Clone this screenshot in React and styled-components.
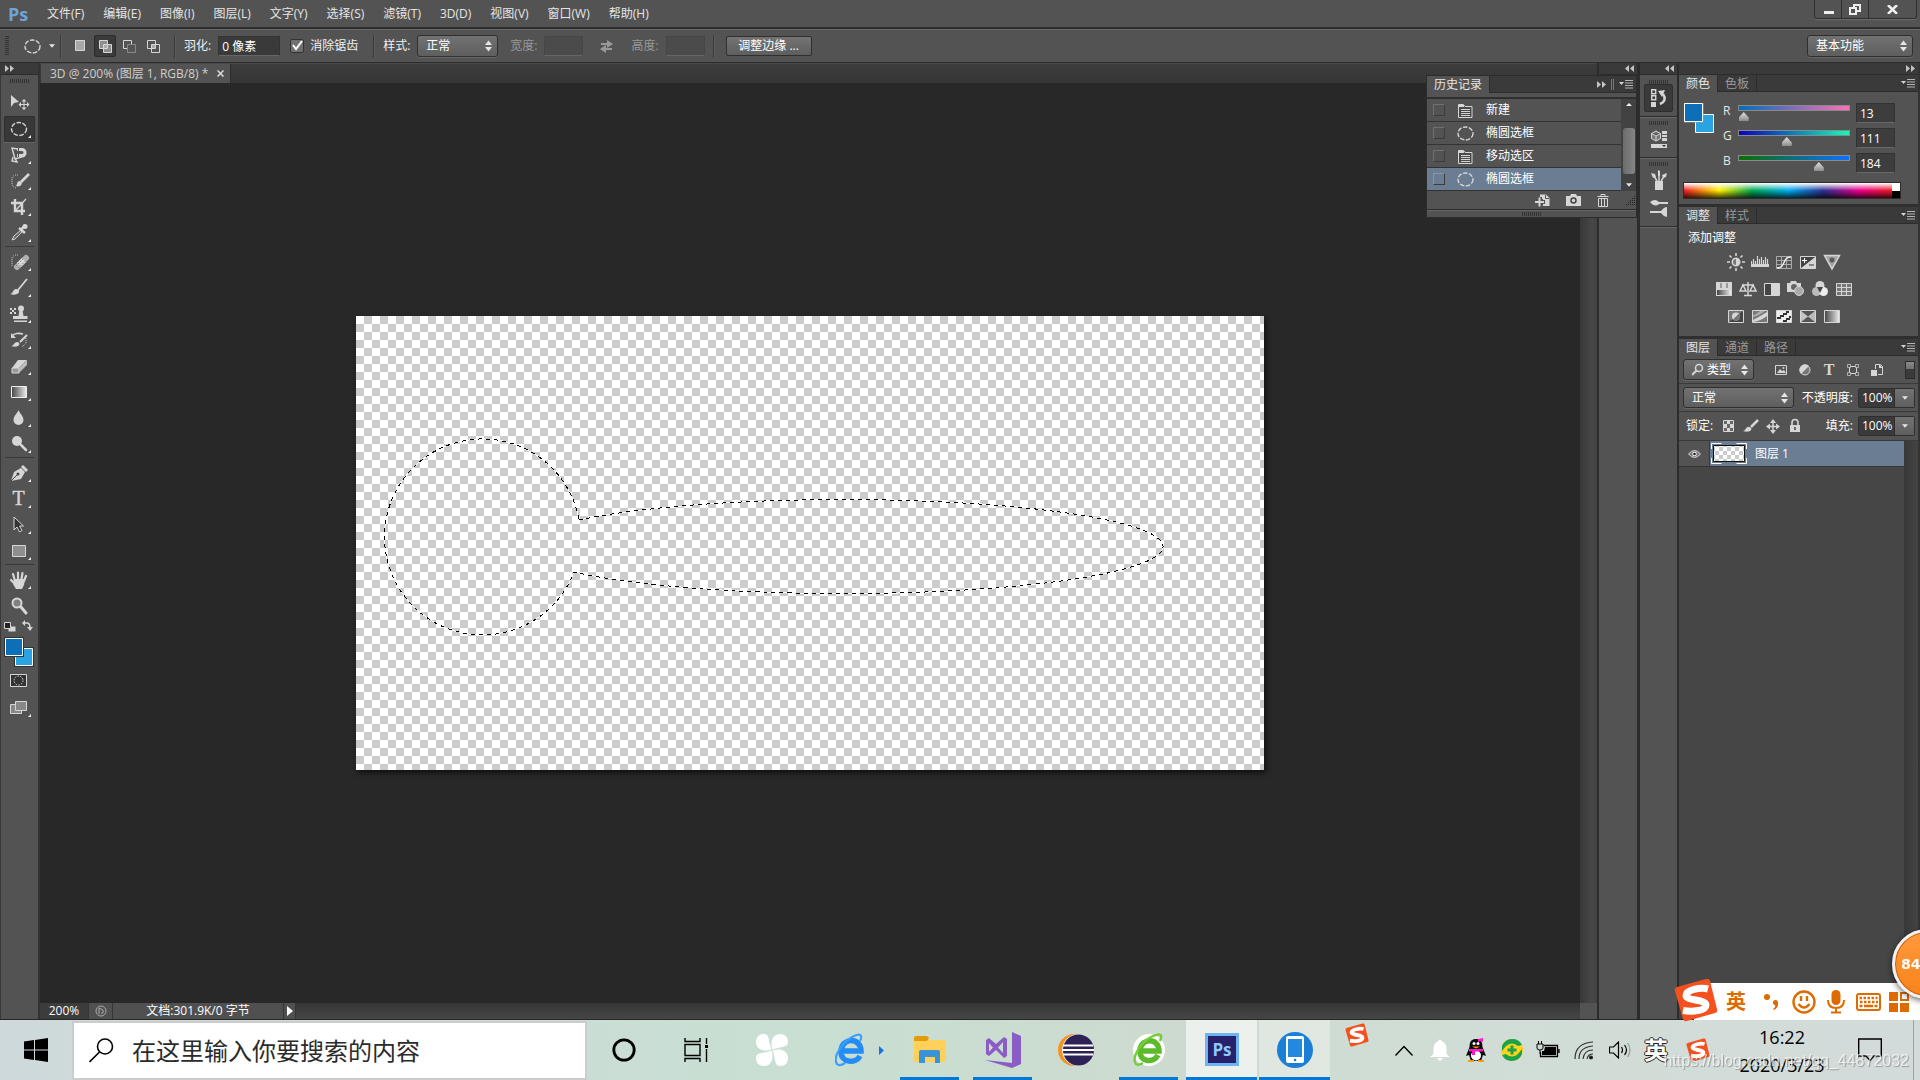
import React, { useState } from 'react';
import styled, { createGlobalStyle } from 'styled-components';

const GlobalStyle = createGlobalStyle`
  * {
    box-sizing: border-box;
  }

  body {
    margin: 0;
    overflow: hidden;
    background-color: #282828;
  }

  button, input, select {
    margin: 0;
    padding: 0;
    border: 0;
    border-radius: 0;
    font: inherit;
    color: inherit;
    background: none;
    outline: none;
    appearance: none;
  }

  svg {
    display: block;
    flex: none;
  }
`;

const PageDiv = styled.div`
  display: flex;
  flex-direction: column;
  height: 100vh;
  font-family: "Open Sans", "Noto Sans CJK SC", sans-serif;
  font-size: 12px;
  line-height: 16px;
  color: #e6e6e6;
  background-color: #535353;
`;

/* menu bar */

const MenuBar = styled.header`
  display: flex;
  align-items: center;
  flex: none;
  height: 29px;
  padding-left: 8px;
  border-bottom: 2px solid #2c2c2c;
`;

const PsLogo = styled.b`
  width: 39px;
  font-family: "Open Sans", sans-serif;
  font-size: 18px;
  line-height: 24px;
  color: #6ea3d8;
`;

const MenuNav = styled.nav`
  display: flex;
  flex: 1;
  gap: 19px;
`;

const MenuButton = styled.button`
  white-space: nowrap;
`;

const WindowButtons = styled.div`
  display: flex;
  align-self: flex-start;
  height: 19px;
  margin-right: 3px;
  border: 1px solid #2f2f2f;
  border-top: 0;
  border-radius: 0 0 3px 3px;
  box-shadow: 0 1px 0 #6a6a6a;

  button {
    display: flex;
    align-items: center;
    justify-content: center;
    width: 27px;
    border-right: 1px solid #2f2f2f;

    &:last-child {
      width: 47px;
      border-right: 0;
    }
  }
`;

/* options bar */

const OptionsBar = styled.div`
  display: flex;
  align-items: center;
  flex: none;
  height: 34px;
  padding-left: 5px;
  padding-right: 7px;
  border-top: 1px solid #686868;
  border-bottom: 1px solid #2c2c2c;
`;

const GripV = styled.div`
  width: 4px;
  height: 20px;
  background: repeating-linear-gradient(#333 0 1px, transparent 1px 2px);
`;

const GripH = styled.div`
  width: 20px;
  height: 4px;
  margin: 0 auto;
  background: repeating-linear-gradient(90deg, #333 0 1px, transparent 1px 2px);
`;

const Separator = styled.div`
  width: 2px;
  height: 23px;
  margin: 0 8px;
  border-left: 1px solid #3a3a3a;
  border-right: 1px solid #5c5c5c;
`;

const CurrentTool = styled.button`
  display: flex;
  align-items: center;
  gap: 8px;
  margin-left: 15px;
  margin-right: -3px;
`;

const ModeButton = styled.button`
  display: flex;
  align-items: center;
  justify-content: center;
  width: 22px;
  height: 22px;
  margin-right: 2px;
  border-radius: 3px;
  background-color: ${props => (props.$active ? '#3a3a3a' : 'transparent')};
  box-shadow: ${props => (props.$active ? 'inset 0 0 0 1px #2c2c2c' : 'none')};
`;

const OptionLabel = styled.label`
  margin-right: 7px;
  white-space: nowrap;
  color: ${props => (props.$off ? '#989898' : '#f0f0f0')};
`;

const OptionInput = styled.input`
  width: ${props => props.$w}px;
  height: 20px;
  padding-left: 3px;
  border: 1px solid ${props => (props.disabled ? '#464646' : '#343434')};
  border-bottom-color: #666;
  color: #fff;
  background-color: ${props => (props.disabled ? '#4b4b4b' : '#3a3a3a')};
`;

const CheckBox = styled.input`
  width: 14px;
  height: 14px;
  margin: 0 6px 0 10px;
  border: 1px solid #333;
  border-radius: 2px;
  background-color: #707070;

  &:checked {
    background-image: url("data:image/svg+xml,%3Csvg xmlns='http://www.w3.org/2000/svg' viewBox='0 0 12 12'%3E%3Cpath d='M2 5l3 4 6-8' fill='none' stroke='white' stroke-width='2'/%3E%3C/svg%3E");
  }
`;

const SelectBox = styled.div`
  display: flex;
  align-items: center;
  width: ${props => props.$w}px;
  height: ${props => props.$h || 22}px;
  padding: 0 5px 0 8px;
  border: 1px solid #2f2f2f;
  border-radius: 3px;
  color: #fff;
  background-image: linear-gradient(#727272, #5e5e5e);
  box-shadow: 0 1px 0 #666;

  select {
    flex: 1;
    min-width: 0;
    height: 100%;
  }

  & + label {
    margin-left: 12px;
  }
`;

const PushButton = styled.button`
  width: 86px;
  height: 20px;
  margin-left: 3px;
  border: 1px solid #2f2f2f;
  border-radius: 2px;
  color: #fff;
  background-image: linear-gradient(#747474, #5e5e5e);
`;

const Spacer = styled.div`
  flex: 1;
`;

/* workspace */

const Workspace = styled.main`
  display: flex;
  flex: 1;
  min-height: 0;
  border-bottom: 1px solid #262626;
`;

const ColumnHead = styled.div`
  display: flex;
  align-items: center;
  justify-content: ${props => props.$side || 'flex-end'};
  flex: none;
  height: 12px;
  padding: 0 3px 0 4px;
  border-bottom: 1px solid #2c2c2c;
  background-color: #3a3a3a;
`;

const ToolColumn = styled.aside`
  display: flex;
  flex-direction: column;
  flex: none;
  width: 40px;
  border-left: 1px solid #383838;
  border-right: 2px solid #333;
  background-color: #535353;

  > ${GripH} {
    margin: 4px auto 7px 9px;
  }
`;

const ToolButton = styled.button`
  display: block;
  flex: none;
  width: 31px;
  height: 26px;
  margin-left: 3px;
  border-radius: 2px;
  background-color: ${props => (props.$active ? '#383838' : 'transparent')};
  box-shadow: ${props => (props.$active ? 'inset 0 0 0 1px #303030, 0 1px 0 #666' : 'none')};
`;

const ToolLine = styled.div`
  flex: none;
  height: 3px;
  margin: 0 4px;
  border-top: 1px solid #3a3a3a;
`;

const DocumentColumn = styled.section`
  display: flex;
  flex-direction: column;
  flex: 1;
  min-width: 0;
  background-color: #282828;
`;

const TabBar = styled.div`
  display: flex;
  flex: none;
  height: 20px;
  padding-left: 1px;
  border-top: 1px solid #484848;
  background-image: linear-gradient(#3c3c3c, #363636);
`;

const DocTab = styled.div`
  display: flex;
  align-items: center;
  justify-content: space-between;
  width: 190px;
  padding: 0 6px 0 9px;
  border-right: 1px solid #2c2c2c;
  color: #d0d0d0;
  white-space: nowrap;
  background-color: #535353;
`;

const Viewport = styled.div`
  display: flex;
  flex: 1;
  min-height: 0;
`;

const Stage = styled.div`
  display: grid;
  place-items: center;
  flex: 1;
  min-width: 0;
  overflow: hidden;
`;

const Artboard = styled.div`
  width: 908px;
  height: 454px;
  background: repeating-conic-gradient(#ccc 0 25%, #fff 0 50%) 0 0 / 16px 16px;
  box-shadow: 2px 3px 5px #111;
`;

const ScrollV = styled.div`
  width: 17px;
  background-image: linear-gradient(90deg, #383838, #474747 70%, #424242);
`;

const StatusBar = styled.footer`
  display: flex;
  align-items: center;
  flex: none;
  height: 16px;
  color: #fff;
  background-image: linear-gradient(#363636, #464646);
`;

const StatusCell = styled.div`
  display: flex;
  align-items: center;
  justify-content: center;
  width: ${props => props.$w}px;
  height: 16px;
  border-right: 1px solid #363636;
  white-space: nowrap;
  background-color: ${props => (props.$dark ? '#3c3c3c' : '#505050')};
`;

const StatusCorner = styled.div`
  width: 17px;
  height: 16px;
  margin-left: auto;
  background-color: #535353;
`;

/* collapsed docks */

const Dock = styled.aside`
  position: relative;
  display: flex;
  flex-direction: column;
  flex: none;
  width: 41px;
  border-left: ${props => props.$left}px solid #2c2c2c;
  border-right: ${props => props.$right}px solid #2c2c2c;
`;

const DockGroup = styled.div`
  display: flex;
  flex-direction: column;
  align-items: center;
  padding: 4px 0;
  border-bottom: 1px solid #2c2c2c;
  box-shadow: 0 1px 0 #686868;

  ${ColumnHead} + & {
    padding-top: 5px;
  }
`;

const DockButton = styled.button`
  display: flex;
  align-items: center;
  justify-content: center;
  width: 29px;
  height: ${props => props.$h || 28}px;
  border-radius: 3px;
  background-color: ${props => (props.$active ? '#3a3a3a' : 'transparent')};
  box-shadow: ${props => (props.$active ? 'inset 0 0 0 1px #2f2f2f' : 'none')};
`;

/* history flyout */

const HistoryPanel = styled.section`
  position: absolute;
  z-index: 2;
  top: 12px;
  right: 0;
  width: 211px;
  border: 1px solid #2c2c2c;
  background-color: #535353;
`;

const PanelTabs = styled.div`
  display: flex;
  align-items: center;
  height: 17px;
  border-bottom: 1px solid #2c2c2c;
  background-color: #3a3a3a;
`;

const PanelTab = styled.button`
  height: 17px;
  padding: 0 7px;
  border-right: 1px solid #2c2c2c;
  line-height: 17px;
  white-space: nowrap;
  color: ${props => (props.$active ? '#e6e6e6' : '#999')};
  background-color: ${props => (props.$active ? '#535353' : 'transparent')};
`;

const TabTools = styled.div`
  display: flex;
  align-items: center;
  gap: 5px;
  margin-left: auto;
  padding-right: 3px;
`;

const HistoryBody = styled.div`
  display: flex;
  margin-top: 4px;
  border-top: 2px solid #2f2f2f;
`;

const HistoryList = styled.ul`
  flex: 1;
  margin: 0;
  padding: 0;
  list-style: none;
`;

const HistoryItem = styled.li`
  display: flex;
  align-items: center;
  height: 23px;
  padding-left: 6px;
  border-bottom: 1px solid #333;
  color: #fff;
  background-color: ${props => (props.$active ? '#6b7d93' : '#535353')};

  input {
    width: 12px;
    height: 12px;
    border: 1px solid ${props => (props.$active ? '#8795a6' : '#707070')};
    border-bottom-color: #3c3c3c;
    border-right-color: #3c3c3c;
  }

  .kind {
    display: flex;
    justify-content: center;
    width: 41px;
  }
`;

const HistoryScroll = styled.div`
  display: flex;
  flex-direction: column;
  align-items: center;
  justify-content: space-between;
  width: 15px;
  padding: 4px 0;
  background-color: #424242;
`;

const ScrollThumb = styled.div`
  width: 12px;
  height: 46px;
  margin-top: 12px;
  border-radius: 3px;
  background-image: linear-gradient(90deg, #6c6c6c, #858585);
`;

const HistoryFoot = styled.div`
  display: flex;
  align-items: center;
  justify-content: flex-end;
  gap: 16px;
  height: 19px;
  padding-right: 1px;
  border-bottom: 1px solid #2c2c2c;
`;

const HistoryGrip = styled.div`
  height: 7px;
  padding-top: 1px;
  border-top: 1px solid #666;
`;

/* right panels */

const PanelColumn = styled.aside`
  display: flex;
  flex-direction: column;
  flex: none;
  width: 241px;
  border-right: 2px solid #333;
`;

const PanelBody = styled.div`
  display: flex;
  flex-direction: column;
  height: 112px;
  margin-bottom: 3px;
  background-color: #535353;
  box-shadow: 0 3px 0 #2f2f2f;
`;

const ColorRows = styled.div`
  display: flex;
  height: 90px;
  padding: 11px 0 0 5px;
`;

const Sliders = styled.div`
  display: flex;
  flex-direction: column;
  margin-left: 9px;
`;

const SliderRow = styled.div`
  display: flex;
  height: 25px;

  > label {
    width: 15px;
    line-height: 16px;
  }
`;

const SliderTrack = styled.div`
  width: 112px;
  height: 6px;
  margin-top: 2px;
  border: 1px solid #8a8a8a;
  background-image: linear-gradient(90deg, ${props => props.$from}, ${props => props.$to});
`;

const RangeInput = styled.input`
  display: block;
  width: 122px;
  height: 9px;
  margin: 1px -5px 0;

  &::-webkit-slider-thumb {
    appearance: none;
    width: 10px;
    height: 9px;
    background-image: linear-gradient(#e2e2e2, #8c8c8c);
    clip-path: polygon(50% 0, 100% 60%, 100% 100%, 0 100%, 0 60%);
  }
`;

const NumberInput = styled.input`
  width: 39px;
  height: 20px;
  margin-left: 6px;
  padding-left: 3px;
  border: 1px solid #333;
  border-bottom-color: #686868;
  color: #fff;
  background-color: #3d3d3d;
`;

const Spectrum = styled.div`
  display: flex;
  height: 17px;
  width: 218px;
  margin-left: 4px;
  border: 1px solid #2c2c2c;

  .hues {
    flex: 1;
    background-image:
      linear-gradient(#fff, rgba(255, 255, 255, 0) 50%, rgba(0, 0, 0, 0) 50%, rgba(0, 0, 0, .75)),
      linear-gradient(90deg, #ed1c24, #fff200 17%, #00a651 33%, #00aeef 50%, #2e3192 67%, #ec008c 84%, #ed1c24);
  }

  .ends {
    width: 8px;
    background-image: linear-gradient(#fff 50%, #000 50%);
  }
`;

const AdjustTitle = styled.div`
  padding: 6px 0 7px 9px;
  color: #fff;
`;

const AdjustRow = styled.div`
  display: flex;
  justify-content: center;
  gap: 6px;
  height: 27px;
  padding-right: 30px;

  button {
    width: 18px;
    height: 18px;
  }
`;

const LayerRow = styled.div`
  display: flex;
  align-items: center;
  flex: none;
  height: ${props => props.$h || 28}px;
  padding: 0 3px 0 4px;
  border-bottom: 1px solid #3a3a3a;
  color: #fff;
  background-color: #535353;

  > span {
    margin-left: 3px;
  }

  .push {
    margin-left: auto;
    padding-right: 5px;
  }
`;

const FilterIcons = styled.div`
  display: flex;
  gap: 6px;
  margin-left: 18px;
`;

const LockIcons = styled.div`
  display: flex;
  gap: 4px;
  margin-left: 7px;
`;

const Toggle = styled.button`
  width: 10px;
  height: 18px;
  margin-left: auto;
  border: 1px solid #2c2c2c;
  background-image: linear-gradient(#8a8a8a, #707070 45%, #3a3a3a 45%);
`;

const PercentBox = styled.div`
  display: flex;
  height: 20px;
  border: 1px solid #2f2f2f;
  border-radius: 2px;

  input {
    width: 35px;
    padding-left: 3px;
    background-color: #3a3a3a;
  }

  button {
    display: flex;
    align-items: center;
    justify-content: center;
    width: 20px;
    border-left: 1px solid #2f2f2f;
    background-image: linear-gradient(#727272, #5e5e5e);
  }
`;

const LayerArea = styled.div`
  display: flex;
  flex: 1;
  background-color: #464646;
`;

const LayerList = styled.div`
  flex: 1;
`;

const LayerItem = styled.div`
  display: flex;
  height: 26px;
  border-bottom: 1px solid #333;
  background-color: #535353;

  .eye {
    display: flex;
    align-items: center;
    justify-content: center;
    width: 31px;
    border-right: 1px solid #3a3a3a;
  }

  .name {
    display: flex;
    align-items: center;
    gap: 8px;
    flex: 1;
    padding-left: 1px;
    color: #fff;
    background-color: #6b7d93;
  }
`;

const LayerScroll = styled.div`
  width: 14px;
  background-image: linear-gradient(90deg, #383838, #444);
`;

/* task bar */

const TaskBar = styled.footer`
  display: flex;
  flex: none;
  height: 60px;
  color: #000;
  background-image: linear-gradient(90deg, #cfd9dc, #c8dfd2 42%, #cedacf 62%, #d0ddd5 74%, #d3dbda);
`;

const TaskCell = styled.button`
  display: flex;
  align-items: center;
  justify-content: center;
  flex: none;
  width: ${props => props.$w || 73}px;
  height: 60px;
  border: solid transparent;
  border-width: 0 1px;
  background-color: ${props => (props.$active ? 'rgba(255, 255, 255, .6)' : props.$soft ? 'rgba(255, 255, 255, .35)' : 'transparent')};
  background-image: ${props => (props.$line ? 'linear-gradient(#0078d7, #0078d7)' : 'none')};
  background-position: center bottom;
  background-repeat: no-repeat;
  background-size: ${props => (props.$line === 'full' ? '100%' : '59px')} 3px;
  background-clip: padding-box;
`;

const SearchBox = styled.label`
  display: flex;
  align-items: center;
  gap: 18px;
  flex: none;
  width: 515px;
  height: 59px;
  margin-top: 1px;
  padding-left: 15px;
  border: 2px solid #ccc;
  background-color: #fff;

  input {
    flex: 1;
    min-width: 0;
    height: 40px;
    font-size: 24px;

    &::placeholder {
      color: #2b2b2b;
      opacity: 1;
    }
  }
`;

const BrowserCell = styled(TaskCell)`
  justify-content: flex-start;
  gap: 14px;
  padding-left: 22px;
`;

const RaisedCell = styled.div`
  padding: 3px 0 0 14px;
`;

const TrayButton = styled.button`
  display: flex;
  align-items: center;
  justify-content: center;
  flex: none;
  width: ${props => props.$w || 36}px;
  height: 60px;
`;

const TrayText = styled.span`
  font-size: 24px;
  font-weight: 700;
  color: #fff;
  text-shadow: 1px 0 #222, -1px 0 #222, 0 1px #222, 0 -1px #222;
`;

const Clock = styled.time`
  flex: none;
  width: 120px;
  padding-top: 3px;
  font-size: 18px;
  line-height: 28px;
  text-align: center;
`;

const ShowDesktop = styled.div`
  width: 7px;
  margin-left: 15px;
  border-left: 1px solid #9ba3a1;
`;

const Watermark = styled.div`
  position: fixed;
  right: 11px;
  bottom: 8px;
  font-family: "Liberation Sans", sans-serif;
  font-size: 16px;
  line-height: 22px;
  color: rgba(255, 255, 255, .7);
  text-shadow: 1px 1px 1px rgba(90, 90, 90, .5);
`;

const ImeBar = styled.div`
  position: fixed;
  right: 0;
  bottom: 60px;
  display: flex;
  align-items: center;
  gap: 8px;
  width: 226px;
  height: 37px;
  padding-left: 32px;
  color: #de6b00;
  background-color: #fff;

  b {
    margin-right: 6px;
    font-size: 20px;
    line-height: 28px;
  }
`;

const ImeLogo = styled.div`
  position: absolute;
  left: -20px;
  top: -5px;
`;

const SpeedBall = styled.div`
  position: fixed;
  right: -42px;
  bottom: 81px;
  width: 70px;
  height: 70px;
  padding-left: 6px;
  border: 3px solid #f2f2f2;
  border-radius: 50%;
  font-family: "DejaVu Sans", sans-serif;
  font-size: 14px;
  font-weight: 700;
  line-height: 64px;
  color: #fff;
  background-image: linear-gradient(#ff9a3c, #f9821a);
  box-shadow: inset 0 0 0 1px #c8610c, 0 2px 6px rgba(0, 0, 0, .6);
`;

const LIGHT = '#d6d6d6';

/* arrow glyphs */

const UpDown = () => (
  <svg width="7" height="12" viewBox="0 0 7 12" fill="#e6e6e6">
    <path d="M0 5l3.500-4.500L7 5zM0 7l3.500 4.500L7 7z" />
  </svg>
);

const Down = ({ size = 7 }) => (
  <svg width={size} height="4" viewBox="0 0 7 4" fill="#e6e6e6"><path d="M0 0h7L3.500 4z" /></svg>
);

const Chevrons = ({ left }) => (
  <svg width="9" height="7" viewBox="0 0 9 7" fill="#c4c4c4">
    {left ? <path d="M4 0v7L0 3.500zM9 0v7L5 3.500z" /> : <path d="M0 0v7l4-3.500zM5 0v7l4-3.500z" />}
  </svg>
);

const PanelMenu = () => (
  <svg width="14" height="9" viewBox="0 0 14 9">
    <path d="M0 2h5L2.500 5z" fill={LIGHT} />
    <path d="M6 .5h8M6 3h8M6 5.500h8M6 8h8" stroke="#b4b4b4" />
  </svg>
);

const DashedOval = ({ w = 17, h = 15 }) => (
  <svg width={w} height={h} viewBox="0 0 17 15">
    <ellipse cx="8.500" cy="7.500" rx="7.500" ry="6.500" fill="none" stroke={LIGHT} strokeWidth="1.400" strokeDasharray="4.500 1.500" />
  </svg>
);

const PageIcon = () => (
  <svg width="15" height="15" viewBox="0 0 15 15">
    <path d="M.5 1.500h5l1.500 2h7v11H.5z" fill="#4a4a4a" stroke={LIGHT} />
    <path d="M1 2h5v2H1z" fill={LIGHT} />
    <path d="M3 6.500h9M3 8.500h9M3 10.500h9M3 12.500h9" stroke={LIGHT} />
  </svg>
);

const MODES = [
  <path key="n" d="M.5 .5h9v10h-9z" fill="#a8a8a8" stroke={LIGHT} />,
  <g key="a"><path d="M.5 .5h8v8h-8zM4.500 4.500h8v8h-8z" fill="#8f8f8f" stroke={LIGHT} /><path d="M5 5h3v3H5z" fill="#aaa" /></g>,
  <g key="s"><path d="M4.500 4.500h8v8h-8z" fill="#555" stroke="#888" /><path d="M8.500 4V.5h-8v8H4" fill="none" stroke={LIGHT} /></g>,
  <g key="i"><path d="M.5 .5h8v8h-8zM4.500 4.500h8v8h-8z" fill="none" stroke={LIGHT} /><path d="M5 5h3v3H5z" fill="#aaa" /></g>,
];

/* tools, each one drawn on a 31 x 26 grid */

const TOOLS = [
  {
    name: '移动工具',
    plain: true,
    draw: <><path d="M7 5v12l3-4 5-1z" fill={LIGHT} /><path d="M20 10v9M15.500 14.500h9" stroke={LIGHT} /><path d="M20 9l2.500 2.500h-5zM20 20l2.500-2.500h-5zM14.500 14.500L17 12v5zM25.500 14.500L23 12v5z" fill={LIGHT} /></>,
  },
  {
    name: '椭圆选框工具',
    draw: <ellipse cx="15" cy="13" rx="7.500" ry="6.500" fill="none" stroke={LIGHT} strokeWidth="1.400" strokeDasharray="4.500 1.500" />,
  },
  {
    name: '磁性套索工具',
    draw: <><path d="M14 7L8 6l3 11 9-2.500 2-3M9 15l-1 4 5 1-2-4" fill="none" stroke={LIGHT} strokeWidth="1.400" /><path d="M13 7.500h5a3 3 0 010 6h-5" fill="none" stroke={LIGHT} strokeWidth="3" /><path d="M14.500 6v3M14.500 12v3" stroke="#444" /></>,
  },
  {
    name: '快速选择工具',
    draw: <><path d="M14 7a5 5 0 00-6 3v6a5 5 0 005 4" fill="none" stroke={LIGHT} strokeDasharray="1 1" /><path d="M25 6l-8 8" stroke={LIGHT} strokeWidth="2.600" /><path d="M11 18c3 0 1-4 4-5 3 0 4 3 1 5-2 1-4 0-5 0z" fill={LIGHT} /></>,
  },
  {
    name: '裁剪工具',
    draw: <><path d="M11 5v12h10M7 9h11v12" fill="none" stroke={LIGHT} strokeWidth="2.400" /><path d="M22 5L12 16" stroke={LIGHT} strokeWidth="1.200" /></>,
  },
  {
    name: '吸管工具',
    line: true,
    draw: <><path d="M8 20l2-4 7-6 1 2-7 7z" fill="#666" stroke={LIGHT} /><path d="M15 8l6 5M17 10l4-5" stroke={LIGHT} strokeWidth="2.500" /><circle cx="21" cy="6.500" r="2.500" fill={LIGHT} /></>,
  },
  {
    name: '污点修复画笔工具',
    draw: <><path d="M14 6a5 5 0 00-6 3v8" fill="none" stroke={LIGHT} strokeDasharray="1 1" /><path d="M13 18l9-9" stroke="#b0b0b0" strokeWidth="6" strokeLinecap="round" /><path d="M15 16l5-5" stroke={LIGHT} strokeWidth="6" /><path d="M12 17l8-8M14.500 19l8-8" stroke="#666" strokeDasharray="1 2" /></>,
  },
  {
    name: '画笔工具',
    draw: <><path d="M23 4l-9 11" stroke={LIGHT} strokeWidth="1.800" /><path d="M6 19c3 0 3-5 6-5 4 0 4 4 1 5-2 1-4 1-7 0z" fill={LIGHT} /></>,
  },
  {
    name: '仿制图章工具',
    draw: <><path d="M6 7h2v2H6zM10 7h2v2h-2zM8 9h2v2H8zM6 11h2v2H6zM10 11h2v2h-2z" fill={LIGHT} /><circle cx="17" cy="7.500" r="3" fill={LIGHT} /><path d="M15.500 9h3l1 6h4v3H9v-3h5.500zM10 19.500h13v1.500H10z" fill={LIGHT} /></>,
  },
  {
    name: '历史记录画笔工具',
    draw: <><path d="M8 9a8 5 0 0111-2" fill="none" stroke={LIGHT} strokeWidth="1.600" /><path d="M7 6v5h5z" fill={LIGHT} /><path d="M23 8l-7 7" stroke={LIGHT} strokeWidth="2" /><path d="M7 19c3 0 3-4 6-4 3 0 3 3 1 4s-4 1-7 0z" fill={LIGHT} /><path d="M22 11v5l-4 4" fill="none" stroke={LIGHT} strokeDasharray="1 1" /></>,
  },
  {
    name: '橡皮擦工具',
    draw: <><path d="M14 7h9l-8 8H8z" fill={LIGHT} /><path d="M8 15h7v5H8z" fill="#9a9a9a" stroke={LIGHT} /><path d="M15 15l8-8v5l-8 8z" fill="#bbb" /></>,
  },
  {
    name: '渐变工具',
    draw: <path d="M7.500 7.500h15v11h-15z" fill="url(#fade)" stroke="#eee" />,
  },
  {
    name: '模糊工具',
    draw: <path d="M14.500 5c1 3 5 6 5 10a5 5 0 01-10 0c0-4 4-7 5-10z" fill={LIGHT} />,
  },
  {
    name: '减淡工具',
    line: true,
    draw: <><circle cx="13" cy="10" r="5" fill={LIGHT} /><path d="M17 14l5 5" stroke={LIGHT} strokeWidth="2.500" strokeLinecap="round" /></>,
  },
  {
    name: '钢笔工具',
    draw: <><path d="M7 21l3-9 7-4 4 4-4 7z" fill={LIGHT} /><path d="M18 6l5 5" stroke={LIGHT} strokeWidth="3" /><path d="M7 21l7-7" stroke="#444" /><circle cx="14" cy="14" r="1.500" fill="#444" /></>,
  },
  {
    name: '横排文字工具',
    draw: <text x="14.500" y="19" textAnchor="middle" fontFamily="Liberation Serif, serif" fontSize="20" fill={LIGHT} stroke={LIGHT} strokeWidth=".4">T</text>,
  },
  {
    name: '路径选择工具',
    draw: <path d="M10 5v13l3-3 2.500 5 2.500-1.500-2.500-4.500h4z" fill="#333" stroke={LIGHT} />,
  },
  {
    name: '矩形工具',
    line: true,
    draw: <path d="M8.500 7.500h13v11h-13z" fill="#8f8f8f" stroke={LIGHT} />,
  },
  {
    name: '抓手工具',
    draw: <><path d="M11 14L9 7M14 12V5.500M17.500 12l1-6M20 14l2-5M11 17l-4-4" stroke={LIGHT} strokeWidth="2.200" strokeLinecap="round" /><path d="M10 12h11l-1 6-2 4h-6l-3-5z" fill={LIGHT} /></>,
  },
  {
    name: '缩放工具',
    plain: true,
    draw: <><circle cx="13" cy="10" r="4.500" fill="#808080" stroke={LIGHT} strokeWidth="2" /><path d="M17 14l5 6" stroke={LIGHT} strokeWidth="3" strokeLinecap="round" /></>,
  },
];

const Tool = ({ tool, active, onPick }) => (
  <ToolButton type="button" aria-label={tool.name} $active={active} onClick={onPick}>
    <svg width="31" height="26" viewBox="0 0 31 26">
      <defs>
        <linearGradient id="fade"><stop offset="0" stopColor="#444" /><stop offset="1" stopColor="#eee" /></linearGradient>
      </defs>
      {tool.draw}
      {!tool.plain && <path d="M27 19v3h-3z" fill="#eee" />}
    </svg>
  </ToolButton>
);

const Swatches = () => (
  <svg width="37" height="98" viewBox="0 6 37 98">
    <path d="M9.500 13.500h5v5h-7v-5z" fill={LIGHT} />
    <path d="M3.500 9.500h6v6h-6z" fill="#222" stroke={LIGHT} />
    <path d="M23 10h3q3 0 3 5" fill="none" stroke={LIGHT} strokeWidth="1.500" />
    <path d="M24 7v6l-3-3zM26 14h6l-3 4z" fill={LIGHT} />
    <path d="M13 34h20v20H13z" fill="#333" />
    <path d="M14.500 35.500h17v17h-17z" fill="#29a3e2" stroke="#fff" />
    <path d="M3 24h20v20H3z" fill="#333" />
    <path d="M4.500 25.500h17v17h-17z" fill="#0d6fb8" stroke="#fff" />
    <path d="M9.500 61.500h16v12h-16z" fill="#333" stroke={LIGHT} />
    <circle cx="17.500" cy="67.500" r="4.500" fill="none" stroke={LIGHT} strokeDasharray="1.500 1.300" />
    <path d="M9.500 91.500h11v9h-11z" fill="#888" stroke={LIGHT} />
    <path d="M14.500 88.500h11v9h-11z" fill="#888" stroke={LIGHT} />
    <path d="M30 101v3h-3z" fill="#eee" />
  </svg>
);

const Selection = () => {
  const outline = 'M223 204A320 47 0 1 1 218 256A98 98 0 1 1 223 204Z';
  return (
    <svg width="908" height="454" viewBox="0 0 908 454" fill="none" shapeRendering="crispEdges">
      <path d={outline} stroke="#fff" />
      <path d={outline} stroke="#000" strokeDasharray="4 4" />
    </svg>
  );
};

/* adjustment icons, 18 x 18 */

const frame = <path d="M1.500 3.500h15v12h-15z" fill="#777" stroke={LIGHT} />;

const ADJUSTMENTS = [
  [
    <g key="sun" stroke={LIGHT} strokeWidth="1.600"><circle cx="9" cy="9" r="3.700" fill="#777" /><path d="M9 0v3M9 15v3M0 9h3M15 9h3M2.500 2.500l2 2M13.500 13.500l2 2M2.500 15.500l2-2M13.500 4.500l2-2" /><path d="M9 5.500a3.500 3.500 0 010 7z" fill={LIGHT} stroke="none" /></g>,
    <g key="levels"><path d="M0 11h18v3H0z" fill={LIGHT} /><path d="M.5 11V8M2.500 11V6M4.500 11V8M6.500 11V3M8.500 11V6M10.500 11V4M12.500 11V7M14.500 11V4M16.500 11V6" stroke={LIGHT} strokeWidth="1.200" /></g>,
    <g key="curve"><path d="M1.500 3.500h15v12h-15zM6.500 3v13M11.500 3v13M1 7.500h16M1 11.500h16" fill="none" stroke="#aaa" /><path d="M2 15c9 0 5-11 14-11" fill="none" stroke="#eee" strokeWidth="1.500" /></g>,
    <g key="exposure">{frame}<path d="M2 15L16 4v11z" fill={LIGHT} /><path d="M2 4h14L2 15z" fill="#444" /><path d="M3 7.500h5M5.500 5v5" stroke="#fff" /><path d="M10 12h5" stroke="#333" /></g>,
    <g key="vibrance"><path d="M1.500 2.500h15L9 16z" fill="#a4a4a4" stroke={LIGHT} strokeWidth="1.500" /><circle cx="9" cy="7" r="2.500" fill="#5a5a5a" /></g>,
  ],
  [
    <g key="hue"><path d="M1 2h16v14H1z" fill={LIGHT} /><path d="M5 3h2v5H5zM11 3h2v5h-2z" fill="#999" /><path d="M2 10h14v5H2z" fill="url(#fade)" /></g>,
    <path key="balance" d="M9 2v14M5 15.500h8M3 5h12M4 5l-3 6h6zM14 5l-3 6h6z" fill="none" stroke={LIGHT} strokeWidth="1.500" />,
    <g key="mono">{frame}<path d="M2 4h6v11H2z" fill="#444" /><path d="M8 4h8v11H8z" fill={LIGHT} /></g>,
    <g key="photo"><path d="M0 3h3l1-2h5l1 2h4v9H0z" fill={LIGHT} /><circle cx="7" cy="7" r="3" fill="#666" /><circle cx="12" cy="11" r="4.500" fill="#aaa" stroke={LIGHT} /></g>,
    <g key="mixer"><circle cx="9" cy="5.500" r="4.500" fill={LIGHT} /><circle cx="5.500" cy="11.500" r="4.500" fill="#bbb" /><circle cx="12.500" cy="11.500" r="4.500" fill="#eee" /><path d="M6 7h6l-3 6z" fill="#444" /></g>,
    <path key="lookup" d="M1.500 3.500h15v12h-15zM6.500 3v13M11.500 3v13M1 7.500h16M1 11.500h16" fill="#777" stroke={LIGHT} />,
  ],
  [
    <g key="invert">{frame}<path d="M2 15L16 4v11z" fill="#444" /><circle cx="9" cy="9.500" r="4" fill={LIGHT} /><path d="M6 12.500a4 4 0 006-6z" fill="#777" /></g>,
    <g key="poster">{frame}<path d="M2 13Q8 10 16 5v4Q10 14 2 15z" fill={LIGHT} /><path d="M2 10Q8 9 14 4H9Q6 7 2 8z" fill="#aaa" /></g>,
    <g key="threshold"><path d="M1.500 3.500h15v12h-15z" fill="#eee" stroke={LIGHT} /><path d="M2 10h3V8h3V6h3V4h3v2h-2v2H9v2H6v2H2zM8 15v-2h3v-2h3V9h2v2h-1v2h-3v2z" fill="#333" /></g>,
    <g key="selective">{frame}<path d="M2 4l7 5.500L16 4zM2 15l7-5.500 7 5.500z" fill="#555" /><path d="M2 4l7 5.500L2 15z" fill="#c4c4c4" /><path d="M16 4L9 9.500l7 5.500z" fill="#bbb" /></g>,
    <path key="map" d="M1.500 3.500h15v12h-15z" fill="url(#fade)" stroke={LIGHT} />,
  ],
];

const FILTERS = [
  <g key="img"><path d="M3.500 4.500h11v9h-11z" fill="#555" stroke={LIGHT} /><path d="M5 12l3-4 2 2 2-1 2 3z" fill={LIGHT} /><circle cx="11.500" cy="7" r="1" fill={LIGHT} /></g>,
  <g key="adj"><circle cx="9" cy="9" r="5" fill="#777" stroke={LIGHT} /><path d="M13 5L5 13a5.500 5.500 0 018-8z" fill={LIGHT} /></g>,
  <text key="type" x="9" y="14" textAnchor="middle" fontFamily="Liberation Serif, serif" fontWeight="700" fontSize="16" fill={LIGHT}>T</text>,
  <g key="shape" stroke={LIGHT}><path d="M5.500 5.500h7v7h-7z" fill="none" /><path d="M3.500 3.500h3v3h-3zM11.500 3.500h3v3h-3zM3.500 11.500h3v3h-3zM11.500 11.500h3v3h-3z" fill="#555" strokeWidth=".7" /></g>,
  <g key="smart"><path d="M7.500 8V3.500h5l2 2v8H10" fill="none" stroke={LIGHT} /><path d="M11 3v4h4M3 9h6v6H3z" fill={LIGHT} /></g>,
];

const LOCKS = [
  <g key="px"><path d="M3.500 3.500h10v11h-10z" fill="#666" stroke={LIGHT} /><path d="M7 4h3v3H7zM4 7h3v4H4zM10 7h3v4h-3zM7 11h3v3H7z" fill={LIGHT} /></g>,
  <g key="brush"><path d="M16 3l-7 7" stroke={LIGHT} strokeWidth="2.500" /><path d="M1 14c3 0 3-5 6-4 3 0 3 3 1 4s-4 1-7 0z" fill={LIGHT} /></g>,
  <g key="move"><path d="M9 4v11M3.500 9.500h11" stroke={LIGHT} strokeWidth="1.500" /><path d="M9 2l3 4H6zM9 17l3-4H6zM2 9.500l4-3v6zM16 9.500l-4-3v6z" fill={LIGHT} /></g>,
  <g key="lock"><path d="M4 8h10v7H4z" fill={LIGHT} /><path d="M6 8V5.500a3 3 0 016 0V8" fill="none" stroke={LIGHT} strokeWidth="1.600" /><path d="M9 10v3" stroke="#444" strokeWidth="1.500" /></g>,
];

const Small = ({ children }) => <svg width="18" height="18" viewBox="0 0 18 18">{children}</svg>;

const SogouLogo = ({ size }) => (
  <svg width={size} height={size} viewBox="0 0 44 44">
    <path d="M3 9Q0 10 1 13l8 28q1 3 4 2l28-8q3-1 2-4L36 3q-1-3-4-2z" fill="#f4511e" />
    <path d="M34 11C26 9 12 12 12 17.500S32 21 32 27 18 34 9 32.500" fill="none" stroke="#fff" strokeWidth="7" />
  </svg>
);

const HISTORY = [
  { id: 1, name: '新建', page: true },
  { id: 2, name: '椭圆选框' },
  { id: 3, name: '移动选区', page: true },
  { id: 4, name: '椭圆选框' },
];

const CHANNELS = [
  { id: 'R', value: 13, from: '#006fb8', to: '#ff6fb8' },
  { id: 'G', value: 111, from: '#0d00b8', to: '#0dffb8' },
  { id: 'B', value: 184, from: '#0d6f00', to: '#0d6fff' },
];

const MENUS = ['文件(F)', '编辑(E)', '图像(I)', '图层(L)', '文字(Y)', '选择(S)', '滤镜(T)', '3D(D)', '视图(V)', '窗口(W)', '帮助(H)'];

function History() {
  const [current, setCurrent] = useState(4);
  return (
    <HistoryPanel>
      <PanelTabs>
        <PanelTab type="button" $active>历史记录</PanelTab>
        <TabTools>
          <Chevrons />
          <svg width="3" height="11" viewBox="0 0 3 11"><path d="M.5 0v11M2.500 0v11" stroke="#777" /></svg>
          <PanelMenu />
        </TabTools>
      </PanelTabs>
      <HistoryBody>
        <HistoryList>
          {HISTORY.map(item => (
            <HistoryItem key={item.id} $active={item.id === current} onClick={() => setCurrent(item.id)}>
              <input type="checkbox" aria-label={item.name} />
              <span className="kind">{item.page ? <PageIcon /> : <DashedOval />}</span>
              {item.name}
            </HistoryItem>
          ))}
        </HistoryList>
        <HistoryScroll>
          <svg width="6" height="3" viewBox="0 0 6 3"><path d="M0 3h6L3 0z" fill="#eee" /></svg>
          <ScrollThumb />
          <Down size={6} />
        </HistoryScroll>
      </HistoryBody>
      <HistoryFoot>
        <svg width="15" height="13" viewBox="0 0 15 13"><path d="M5 .5h6l3.500 3.500v8H8V5H5z" fill={LIGHT} /><path d="M10.500 1v3.500h3.500" fill="none" stroke="#555" /><path d="M-1 6h3V3h5v3h3v4H7v3H2v-3h-3z" fill="#535353" /><path d="M0 7h9v2H0zM3.500 3.500h2v9h-2z" fill={LIGHT} /></svg>
        <svg width="15" height="12" viewBox="0 0 15 12"><path d="M0 2h4l1-2h5l1 2h4v10H0z" fill={LIGHT} /><circle cx="7.500" cy="6.500" r="2.500" fill={LIGHT} stroke="#444" strokeWidth="1.500" /></svg>
        <svg width="12" height="13" viewBox="0 0 12 13"><path d="M.5 2.500h11M4 2V.5h4V2M1.500 4.500h9v8h-9zM4.500 5v7M7.500 5v7" fill="none" stroke={LIGHT} /></svg>
        <svg width="10" height="10" viewBox="0 0 10 10"><path d="M1 9.500h9M3 7.500h7M5 5.500h5M7 3.500h3M9 1.500h1" stroke="#222" strokeDasharray="1 1" /></svg>
      </HistoryFoot>
      <HistoryGrip><GripH /></HistoryGrip>
    </HistoryPanel>
  );
}

function ColorPanel() {
  return (
    <>
      <PanelTabs>
        <PanelTab type="button" $active>颜色</PanelTab>
        <PanelTab type="button">色板</PanelTab>
        <TabTools><PanelMenu /></TabTools>
      </PanelTabs>
      <PanelBody>
        <ColorRows>
          <svg width="30" height="30" viewBox="0 0 30 30">
            <path d="M11.500 11.500h18v18h-18z" fill="#29a3e2" stroke="#fff" />
            <path d="M-.5-.5h20v20h-20z" fill="#999" />
            <path d="M.5 .5h18v18H.5z" fill="#0d6fb8" stroke="#fff" />
          </svg>
          <Sliders>
            {CHANNELS.map(ch => (
              <SliderRow key={ch.id}>
                <label htmlFor={'range' + ch.id}>{ch.id}</label>
                <div>
                  <SliderTrack $from={ch.from} $to={ch.to} />
                  <RangeInput id={'range' + ch.id} type="range" min="0" max="255" defaultValue={ch.value} />
                </div>
                <NumberInput aria-label={ch.id} defaultValue={ch.value} />
              </SliderRow>
            ))}
          </Sliders>
        </ColorRows>
        <Spectrum><div className="hues" /><div className="ends" /></Spectrum>
      </PanelBody>
    </>
  );
}

function AdjustPanel() {
  return (
    <>
      <PanelTabs>
        <PanelTab type="button" $active>调整</PanelTab>
        <PanelTab type="button">样式</PanelTab>
        <TabTools><PanelMenu /></TabTools>
      </PanelTabs>
      <PanelBody>
        <AdjustTitle>添加调整</AdjustTitle>
        {ADJUSTMENTS.map((row, i) => (
          <AdjustRow key={i}>
            {row.map(icon => (
              <button key={icon.key} type="button" aria-label={icon.key}><Small>{icon}</Small></button>
            ))}
          </AdjustRow>
        ))}
      </PanelBody>
    </>
  );
}

function LayersPanel() {
  return (
    <>
      <PanelTabs>
        <PanelTab type="button" $active>图层</PanelTab>
        <PanelTab type="button">通道</PanelTab>
        <PanelTab type="button">路径</PanelTab>
        <TabTools><PanelMenu /></TabTools>
      </PanelTabs>
      <LayerRow>
        <SelectBox $w={71} $h={21}>
          <svg width="15" height="13" viewBox="0 0 15 13" fill="none" stroke={LIGHT} strokeWidth="1.500"><circle cx="7" cy="5" r="3.500" /><path d="M4.500 7.500L0 12" strokeWidth="2" /></svg>
          <select aria-label="筛选"><option>类型</option></select>
          <UpDown />
        </SelectBox>
        <FilterIcons>{FILTERS.map(icon => <Small key={icon.key}>{icon}</Small>)}</FilterIcons>
        <Toggle type="button" aria-label="打开或关闭图层过滤" />
      </LayerRow>
      <LayerRow>
        <SelectBox $w={111} $h={21}>
          <select aria-label="混合模式"><option>正常</option></select>
          <UpDown />
        </SelectBox>
        <label className="push" htmlFor="opacity">不透明度:</label>
        <PercentBox>
          <input id="opacity" defaultValue="100%" />
          <button type="button" aria-label="不透明度"><Down size={6} /></button>
        </PercentBox>
      </LayerRow>
      <LayerRow $h={29}>
        <span>锁定:</span>
        <LockIcons>{LOCKS.map(icon => <Small key={icon.key}>{icon}</Small>)}</LockIcons>
        <label className="push" htmlFor="fill">填充:</label>
        <PercentBox>
          <input id="fill" defaultValue="100%" />
          <button type="button" aria-label="填充"><Down size={6} /></button>
        </PercentBox>
      </LayerRow>
      <LayerArea>
        <LayerList>
          <LayerItem>
            <button type="button" className="eye" aria-label="可见">
              <svg width="13" height="10" viewBox="0 0 13 10"><path d="M.5 5Q6.500-2 12.500 5 6.500 12 .5 5z" fill="#777" stroke={LIGHT} /><circle cx="6.500" cy="5" r="2.300" fill="#eee" /><circle cx="6.500" cy="5" r="1.300" fill="#222" /></svg>
            </button>
            <div className="name">
              <svg width="36" height="21" viewBox="0 0 36 21">
                <defs>
                  <pattern id="check" width="8" height="8" patternUnits="userSpaceOnUse">
                    <path d="M0 0h8v8H0z" fill="#fff" /><path d="M4 0h4v4H4zM0 4h4v4H0z" fill="#ccc" />
                  </pattern>
                </defs>
                <path d="M2.500 2.500h31v16h-31z" fill="url(#check)" stroke="#111" />
                <path d="M.5 6V.5h10M25.500 .5h10V6M35.500 15v5.500h-10M10.500 20.500H.5V15" fill="none" stroke="#fff" />
              </svg>
              图层 1
            </div>
          </LayerItem>
        </LayerList>
        <LayerScroll />
      </LayerArea>
    </>
  );
}

function Taskbar() {
  const petal = 'M15.500 15.500C9 18 0 16 0 8 0 3 3 0 8 0c6 0 4 7 7.500 15.500z';
  return (
    <TaskBar>
      <TaskCell type="button" $w={72} aria-label="开始">
        <svg width="24" height="24" viewBox="0 0 24 24"><path d="M0 3.500l10-1.400v9.400H0zM11 2l13-2v11.500H11zM0 12.500h10v9.400L0 20.500zM11 12.500h13V24l-13-2z" /></svg>
      </TaskCell>
      <SearchBox>
        <svg width="25" height="25" viewBox="0 0 25 25" fill="none" stroke="#000" strokeWidth="1.600"><circle cx="16" cy="8.500" r="7.500" /><path d="M10.500 14L.5 24" /></svg>
        <input placeholder="在这里输入你要搜索的内容" />
      </SearchBox>
      <TaskCell type="button" $w={73} aria-label="Cortana">
        <svg width="24" height="24" viewBox="0 0 24 24"><circle cx="12" cy="12" r="10.200" fill="none" stroke="#000" strokeWidth="2.800" /></svg>
      </TaskCell>
      <TaskCell type="button" $w={72} aria-label="任务视图">
        <svg width="25" height="24" viewBox="0 0 25 24" fill="none" stroke="#000" strokeWidth="1.400"><path d="M1 0v3.500h15V0M1 24v-3.500h15V24M1 6.500h15v11H1zM22.500 0v6M22.500 11v13" /><path d="M21 7h3v3h-3z" fill="#000" stroke="none" /></svg>
      </TaskCell>
      <TaskCell type="button" $w={80} aria-label="风扇">
        <svg width="32" height="32" viewBox="0 0 32 32" fill="#fff">
          {[0, 90, 180, 270].map(turn => <path key={turn} d={petal} transform={`rotate(${turn} 16 16)`} />)}
        </svg>
      </TaskCell>
      <BrowserCell type="button" $w={81} aria-label="Internet Explorer">
        <svg width="30" height="34" viewBox="0 0 30 34" fill="none"><path d="M6 18h20c0-14-20-14-20 1 0 11 15 12 19 4" stroke="#238cf5" strokeWidth="5.500" /><path d="M25 8c3-6 0-8-6-5C8 8-3 24 2 31c2 2 5 1 8-1" stroke="#3b9ffb" strokeWidth="2.200" /></svg>
        <svg width="5" height="9" viewBox="0 0 5 9" fill="#1673e6"><path d="M0 0l5 4.500L0 9z" /></svg>
      </BrowserCell>
      <TaskCell type="button" $line="short" aria-label="文件资源管理器">
        <svg width="32" height="28" viewBox="0 0 32 28"><path d="M0 2q0-2 2-2h11l3 4h14q2 0 2 2v18q0 2-2 2H0z" fill="#ffd158" /><path d="M0 2q0-2 2-2h11l2 2-2 3H0z" fill="#df9c0d" /><path d="M5 27V16q0-2 2-2h17q2 0 2 2v11h-5v-6H11v6z" fill="#3893d8" /></svg>
      </TaskCell>
      <TaskCell type="button" $line="short" aria-label="Visual Studio">
        <svg width="36" height="36" viewBox="0 0 36 36" fill="#8a5cc6"><path d="M27 0l9 4v28l-9 4L0 28l27 3z" /><path d="M1 8l3-2 7 6 8-7 3 2v17l-3 2-8-8-7 6-3-2zM4 11v9l4-4.500zM18 10l-5 5.500 5 5.500z" fillRule="evenodd" /></svg>
      </TaskCell>
      <TaskCell type="button" aria-label="Eclipse">
        <svg width="36" height="32" viewBox="0 0 36 32"><circle cx="16" cy="16" r="16" fill="#f7941e" /><circle cx="20" cy="16" r="16" fill="#e8e3ee" /><circle cx="20.500" cy="16" r="15.500" fill="#2c2255" /><path d="M5 11.500h30M4 16h32M5 20.500h30" stroke="#fff" strokeWidth="2" /></svg>
      </TaskCell>
      <TaskCell type="button" $line="short" aria-label="浏览器">
        <svg width="34" height="36" viewBox="0 0 34 36" fill="none"><circle cx="17" cy="18" r="16" fill="#fff" /><path d="M9 19h18C27 5 8 6 8 19c0 12 14 12 18 4" stroke="#5dbb2b" strokeWidth="5.500" /><path d="M28 9c4-9-3-7-9-4C9 10-1 26 4 32c2 2 5 0 7-1" stroke="#76cd3c" strokeWidth="2.400" /></svg>
      </TaskCell>
      <TaskCell type="button" $active $line="full" aria-label="Photoshop">
        <svg width="34" height="34" viewBox="0 0 34 34"><path d="M1.500 1.500h31v30h-31z" fill="#26216a" stroke="#6fb4f2" strokeWidth="3" /><text x="17" y="23" textAnchor="middle" fontFamily="Open Sans, sans-serif" fontWeight="700" fontSize="17" fill="#8dc8ff">Ps</text></svg>
      </TaskCell>
      <TaskCell type="button" $soft $line="full" aria-label="手机">
        <svg width="36" height="36" viewBox="0 0 36 36"><circle cx="18" cy="18" r="18" fill="#1b7fd6" /><rect x="9" y="4" width="18" height="27" rx="2" fill="#fff" /><path d="M11 7h14v18H11z" fill="#2389de" /><circle cx="18" cy="28" r="1.300" fill="#1b7fd6" /></svg>
      </TaskCell>
      <RaisedCell><SogouLogo size={24} /></RaisedCell>
      <Spacer />
      <TrayButton type="button" aria-label="显示隐藏的图标">
        <svg width="18" height="11" viewBox="0 0 18 11"><path d="M.5 10.500L9 1.500l8.500 9" fill="none" stroke="#000" strokeWidth="1.400" /></svg>
      </TrayButton>
      <TrayButton type="button" aria-label="通知">
        <svg width="22" height="22" viewBox="0 0 22 22" fill="#fff"><path d="M9.500 2a1.500 1.500 0 013 0q5 2 5 8v5l3 3H1l3.500-3v-5q0-6 5-8zM8 19h6l-3 3z" /></svg>
      </TrayButton>
      <TrayButton type="button" aria-label="QQ">
        <svg width="22" height="24" viewBox="0 0 22 24"><path d="M4.500 9C4.500 3 7 1 11 1s6.500 2 6.500 8l3.500 9-3-1-2 6H6l-2-6-3 1z" fill="#0a0a0a" /><ellipse cx="11" cy="17.500" rx="5" ry="5" fill="#fff" /><path d="M4 11h14v2.500h-8V17H7v-3.500H4zM13 1l5-1v4l-2-1-3 1z" fill="#ff1bc4" /><circle cx="9" cy="5.500" r="1.500" fill="#fff" /><circle cx="13" cy="5.500" r="1.500" fill="#fff" /><path d="M7 8.500h8l-4 2zM3 22h6v2H3zM13 22h6v2h-6z" fill="#f79b12" /></svg>
      </TrayButton>
      <TrayButton type="button" aria-label="安全卫士">
        <svg width="24" height="24" viewBox="0 0 24 24"><circle cx="12" cy="12" r="11" fill="#ffd31c" /><path d="M2 8A11 11 0 0122 7l-4 1q-6-5-12 0l-4 5zM22 16A11 11 0 012 17l4-1q6 5 12 0l4-5z" fill="#1aa34a" /><path d="M12 7.500v9M7.500 12h9" stroke="#1aa34a" strokeWidth="3" /></svg>
      </TrayButton>
      <TrayButton type="button" aria-label="电源">
        <svg width="24" height="18" viewBox="0 0 24 18"><path d="M7.500 4.500h14v11h-17V11M23 8v4" fill="none" stroke="#000" strokeWidth="1.300" /><path d="M9 6h11v8H6v-4h2z" /><path d="M1 3h6v4q0 2-3 2T1 7zM2.500 0v3M5.500 0v3M4 9v4" fill="#d0dad4" stroke="#000" /></svg>
      </TrayButton>
      <TrayButton type="button" aria-label="网络">
        <svg width="20" height="19" viewBox="0 0 20 19" fill="none" stroke="#333" strokeWidth="1.200"><path d="M1 18Q1 2 19 1M5 18Q5 6 19 5M9 18q1-9 10-9M13 18q1-5 6-5" /><circle cx="17" cy="16.500" r="1.500" fill="#000" /></svg>
      </TrayButton>
      <TrayButton type="button" aria-label="音量">
        <svg width="22" height="18" viewBox="0 0 22 18" fill="none" stroke="#000" strokeWidth="1.200"><path d="M.5 6h4l5-5v16l-5-5h-4zM12.500 6q2 3 0 6M15.500 4q4 5 0 10" /><path d="M18.500 2q5 7 0 14" stroke="#999" /></svg>
      </TrayButton>
      <TrayButton type="button"><TrayText>英</TrayText></TrayButton>
      <TrayButton type="button" $w={48} aria-label="输入法"><SogouLogo size={24} /></TrayButton>
      <Clock>16:22<br />2020/3/23</Clock>
      <TrayButton type="button" $w={56} aria-label="操作中心">
        <svg width="24" height="24" viewBox="0 0 24 24"><path d="M.7 1h22.600v17H16l-4 4.500L8 18H.7z" fill="none" stroke="#000" strokeWidth="1.400" /></svg>
      </TrayButton>
      <ShowDesktop />
    </TaskBar>
  );
}

function Ime() {
  return (
    <ImeBar>
      <ImeLogo><SogouLogo size={44} /></ImeLogo>
      <b>英</b>
      <svg width="24" height="18" viewBox="0 0 24 18" fill="#de6b00"><circle cx="7" cy="4" r="3" /><path d="M13 10a2.500 2.500 0 015-1q1 5-4 8l-1-1q3-2 2-4-2 0-2-2z" /></svg>
      <svg width="24" height="24" viewBox="0 0 24 24" fill="none" stroke="#de6b00" strokeWidth="2.400"><circle cx="12" cy="12" r="10.500" /><path d="M6.500 14q5.500 7 11 0M9 6v5M15 6v5" /></svg>
      <svg width="24" height="24" viewBox="0 0 24 24" fill="none" stroke="#de6b00" strokeWidth="2"><rect x="7.500" y="0" width="9" height="15" rx="4.500" fill="#de6b00" stroke="none" /><path d="M4 10q0 8 8 8t8-8M12 18v4M7 22.500h10" /></svg>
      <svg width="25" height="18" viewBox="0 0 25 18"><rect x="1" y="1" width="23" height="16" rx="2" fill="none" stroke="#de6b00" strokeWidth="2" /><path d="M3.500 5h18M4 9h18" stroke="#de6b00" strokeWidth="2.500" strokeDasharray="2.500 1.500" /><path d="M3.500 13h3M8 13h9M18.500 13h3" stroke="#de6b00" strokeWidth="2.500" /></svg>
      <svg width="20" height="20" viewBox="0 0 20 20"><path d="M0 0h9v9H0zM0 11h9v9H0zM11 11h9v9h-9z" fill="#de6b00" /><path d="M12 1h7v7h-7z" fill="none" stroke="#de6b00" strokeWidth="2" /></svg>
    </ImeBar>
  );
}

function App() {
  const [tool, setTool] = useState(1);
  return (
    <PageDiv>
      <GlobalStyle />
      <MenuBar>
        <PsLogo>Ps</PsLogo>
        <MenuNav>{MENUS.map(name => <MenuButton key={name} type="button">{name}</MenuButton>)}</MenuNav>
        <WindowButtons>
          <button type="button" aria-label="最小化"><svg width="11" height="11" viewBox="0 0 11 11"><path d="M1 7h10v3H1z" fill="#eee" /></svg></button>
          <button type="button" aria-label="还原"><svg width="12" height="11" viewBox="0 0 12 11" fill="none" stroke="#eee" strokeWidth="2"><path d="M5 4V1h6v6H8M1 4h6v6H1z" /></svg></button>
          <button type="button" aria-label="关闭"><svg width="11" height="9" viewBox="0 0 11 9"><path d="M1 0l9 9M10 0L1 9" stroke="#eee" strokeWidth="2.500" /></svg></button>
        </WindowButtons>
      </MenuBar>

      <OptionsBar>
        <GripV />
        <CurrentTool type="button" aria-label="椭圆选框工具"><DashedOval /><Down size={6} /></CurrentTool>
        <Separator />
        {MODES.map((icon, i) => (
          <ModeButton key={icon.key} type="button" $active={i === 1} aria-label={'选区 ' + (i + 1)}>
            <svg width="13" height="13" viewBox="0 0 13 13">{icon}</svg>
          </ModeButton>
        ))}
        <Separator />
        <OptionLabel htmlFor="feather">羽化:</OptionLabel>
        <OptionInput id="feather" $w={62} defaultValue="0 像素" />
        <CheckBox id="smooth" type="checkbox" defaultChecked />
        <OptionLabel htmlFor="smooth">消除锯齿</OptionLabel>
        <Separator />
        <OptionLabel htmlFor="style">样式:</OptionLabel>
        <SelectBox $w={81}><select id="style"><option>正常</option></select><UpDown /></SelectBox>
        <OptionLabel $off htmlFor="width">宽度:</OptionLabel>
        <OptionInput id="width" $w={39} disabled />
        <svg width="48" height="13" viewBox="0 0 48 13" fill="#999"><path d="M18 3h6V0l6 4-6 4V5h-6zM29 8h-6V5l-6 4 6 4v-3h6z" /></svg>
        <OptionLabel $off htmlFor="height">高度:</OptionLabel>
        <OptionInput id="height" $w={39} disabled />
        <Separator />
        <PushButton type="button">调整边缘 ...</PushButton>
        <Spacer />
        <SelectBox $w={106}><select aria-label="工作区"><option>基本功能</option></select><UpDown /></SelectBox>
      </OptionsBar>

      <Workspace>
        <ToolColumn>
          <ColumnHead $side="flex-start"><Chevrons /></ColumnHead>
          <GripH />
          {TOOLS.map((item, i) => (
            <React.Fragment key={item.name}>
              <Tool tool={item} active={i === tool} onPick={() => setTool(i)} />
              {item.line && <ToolLine />}
            </React.Fragment>
          ))}
          <Swatches />
        </ToolColumn>

        <DocumentColumn>
          <TabBar>
            <DocTab>
              <span>3D @ 200% (图层 1, RGB/8) *</span>
              <svg width="7" height="7" viewBox="0 0 7 7"><path d="M.5 .5l6 6M6.500 .5l-6 6" stroke="#ddd" strokeWidth="1.500" /></svg>
            </DocTab>
          </TabBar>
          <Viewport>
            <Stage><Artboard><Selection /></Artboard></Stage>
            <ScrollV />
          </Viewport>
          <StatusBar>
            <StatusCell $w={49} $dark>200%</StatusCell>
            <StatusCell $w={24}>
              <svg width="12" height="12" viewBox="0 0 12 12" fill="none" stroke="#aaa"><circle cx="6" cy="6" r="5" /><path d="M4 9V3l4 2v3H6" /></svg>
            </StatusCell>
            <StatusCell $w={171}>文档:301.9K/0 字节</StatusCell>
            <StatusCell $w={12}><svg width="6" height="10" viewBox="0 0 6 10"><path d="M0 0l6 5-6 5z" fill="#fff" /></svg></StatusCell>
            <StatusCorner />
          </StatusBar>
        </DocumentColumn>

        <Dock $left={2} $right={1}>
          <ColumnHead><Chevrons left /></ColumnHead>
          <History />
        </Dock>

        <Dock $left={2} $right={2}>
          <ColumnHead><Chevrons left /></ColumnHead>
          <DockGroup>
            <GripH />
            <DockButton type="button" $active aria-label="历史记录">
              <svg width="16" height="18" viewBox="0 0 16 18"><path d="M.7 .7h4v4h-4zM.7 6.700h4v4h-4z" fill="none" stroke={LIGHT} strokeWidth="1.400" /><path d="M0 13h5v5H0z" fill={LIGHT} /><path d="M9 15c5-2 6-6 3-10" fill="none" stroke={LIGHT} strokeWidth="2.500" /><path d="M7 2l7-1-3 7z" fill={LIGHT} /></svg>
            </DockButton>
          </DockGroup>
          <DockGroup>
            <GripH />
            <DockButton type="button" aria-label="属性">
              <svg width="16" height="18" viewBox="0 0 16 18"><path d="M5 1l4.500 2.500v5L5 11 .5 8.500v-5zM.5 3.500L5 6l4.500-2.500M5 6v5" fill="#777" stroke={LIGHT} /><path d="M11 1h5v3h-5zM11 5h5v2h-5zM11 8h5v3h-5zM0 14h16v4H0z" fill={LIGHT} /><path d="M11 15h4l-2 2z" fill="#333" /></svg>
            </DockButton>
          </DockGroup>
          <DockGroup>
            <GripH />
            <DockButton type="button" aria-label="画笔预设">
              <svg width="16" height="20" viewBox="0 0 16 20"><path d="M4 11h8v9H4z" fill={LIGHT} /><path d="M6 11L3 6M8 11V4M10 11l4-6" stroke={LIGHT} strokeWidth="1.500" /><path d="M0 3l4 1 1 3-3 1zM7 0l2 1v5H7zM11 5l5-2-1 4-3 1z" fill={LIGHT} /></svg>
            </DockButton>
            <DockButton type="button" aria-label="画笔">
              <svg width="18" height="18" viewBox="0 0 18 18"><path d="M0 3q5-4 9 0h9v2H9q-4 4-9-2zM0 12h11q3-4 6-4v10q-4-1-6-4H0z" fill={LIGHT} /></svg>
            </DockButton>
          </DockGroup>
        </Dock>

        <PanelColumn>
          <ColumnHead><Chevrons /></ColumnHead>
          <ColorPanel />
          <AdjustPanel />
          <LayersPanel />
        </PanelColumn>
      </Workspace>

      <Taskbar />
      <Ime />
      <SpeedBall>84</SpeedBall>
      <Watermark>https://blog.csdn.net/qq_44872032</Watermark>
    </PageDiv>
  );
}

export default App;
